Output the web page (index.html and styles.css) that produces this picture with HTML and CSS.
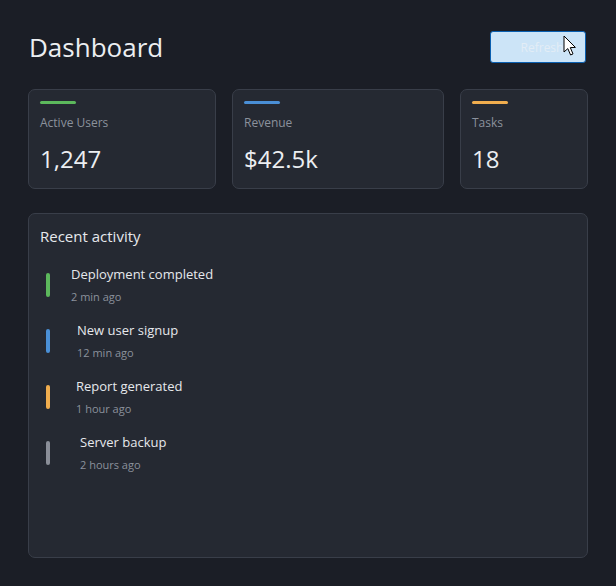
FILE: index.html
```html
<!DOCTYPE html>
<html lang="en">
<head>
<meta charset="utf-8">
<title>Dashboard</title>
<link rel="stylesheet" href="styles.css">
</head>
<body>
<div class="page">
  <header class="header">
    <h1 class="title">Dashboard</h1>
    <div class="btn-wrap">
      <button class="btn" type="button">Refresh</button>
      <svg class="cursor" width="14" height="22" viewBox="0 0 14 22" aria-hidden="true">
        <path d="M1 1 L1 17 L4.8 13.6 L7.6 20 L10 18.9 L7.3 12.6 L12.4 12.4 Z" fill="#ffffff" stroke="#000000" stroke-width="1" stroke-linejoin="miter"/>
      </svg>
    </div>
  </header>

  <section class="stats">
    <div class="card">
      <div class="accent accent-green"></div>
      <div class="label">Active Users</div>
      <div class="value">1,247</div>
    </div>
    <div class="card">
      <div class="accent accent-blue"></div>
      <div class="label">Revenue</div>
      <div class="value">$42.5k</div>
    </div>
    <div class="card">
      <div class="accent accent-orange"></div>
      <div class="label">Tasks</div>
      <div class="value">18</div>
    </div>
  </section>

  <section class="panel">
    <h2 class="panel-title">Recent activity</h2>
    <ul class="list">
      <li class="item">
        <span class="bar bar-green"></span>
        <div class="item-text">
          <div class="item-title">Deployment completed</div>
          <div class="item-time">2 min ago</div>
        </div>
      </li>
      <li class="item item-2">
        <span class="bar bar-blue"></span>
        <div class="item-text">
          <div class="item-title">New user signup</div>
          <div class="item-time">12 min ago</div>
        </div>
      </li>
      <li class="item item-3">
        <span class="bar bar-orange"></span>
        <div class="item-text">
          <div class="item-title">Report generated</div>
          <div class="item-time">1 hour ago</div>
        </div>
      </li>
      <li class="item item-4">
        <span class="bar bar-gray"></span>
        <div class="item-text">
          <div class="item-title">Server backup</div>
          <div class="item-time">2 hours ago</div>
        </div>
      </li>
    </ul>
  </section>
</div>
</body>
</html>
```
FILE: styles.css
```css
* { box-sizing: border-box; }

html, body {
  margin: 0;
  padding: 0;
  background: #1b1e26;
}

body {
  font-family: "Open Sans", "Noto Sans", "Liberation Sans", sans-serif;
  color: #e6e8ec;
  width: 616px;
  height: 586px;
  overflow: hidden;
}

.page {
  padding: 27px 28px 28px 28px;
  display: flex;
  flex-direction: column;
  height: 586px;
}

.header {
  display: flex;
  justify-content: space-between;
  align-items: center;
  height: 40px;
  margin-bottom: 22px;
}

.title {
  margin: 0 0 0 1px;
  font-size: 26px;
  font-weight: 400;
  line-height: 40px;
  color: #eceef1;
}

.btn-wrap {
  position: relative;
  margin-right: 2px;
}

.btn {
  width: 96px;
  height: 32px;
  background: #cce4f7;
  border: 1px solid #0a5fb0;
  border-radius: 3px;
  color: #e3edf6;
  font-family: inherit;
  font-size: 12px;
  padding: 0 0 0 8px;
  display: block;
}

.cursor {
  position: absolute;
  left: 73px;
  top: 4px;
}

.stats {
  display: grid;
  grid-template-columns: 188px 212px 128px;
  column-gap: 16px;
  margin-bottom: 24px;
}

.card {
  height: 100px;
  background: #252932;
  border: 1px solid #393e49;
  border-radius: 7px;
  padding: 11px 11px;
}

.accent {
  width: 36px;
  height: 3px;
  border-radius: 2px;
}
.accent-green { background: #5cb85c; }
.accent-blue { background: #4a8fd6; }
.accent-orange { background: #f0ad4e; }

.label {
  margin-top: 11px;
  font-size: 12px;
  line-height: 16px;
  color: #8b919c;
}

.value {
  margin-top: 13px;
  font-size: 24px;
  line-height: 30px;
  color: #eceef1;
}

.panel {
  flex: 1;
  background: #252932;
  border: 1px solid #393e49;
  border-radius: 7px;
  padding: 11px 11px;
}

.panel-title {
  margin: 0;
  font-size: 15px;
  font-weight: 400;
  line-height: 22px;
  color: #e6e8ec;
}

.list {
  list-style: none;
  margin: 17px 0 0 0;
  padding: 0;
  display: flex;
  flex-direction: column;
  gap: 15px;
}

.item {
  display: flex;
  align-items: center;
  padding-left: 6px;
}

.bar {
  width: 4px;
  height: 24px;
  border-radius: 2px;
  flex: none;
}
.bar-green { background: #5cb85c; }
.bar-blue { background: #4a8fd6; }
.bar-orange { background: #f0ad4e; }
.bar-gray { background: #8a8e98; }

.item-text {
  margin-left: 21px;
}
.item-2 .item-text { margin-left: 27px; }
.item-3 .item-text { margin-left: 26px; }
.item-4 .item-text { margin-left: 30px; }

.item-title {
  font-size: 13px;
  line-height: 20px;
  color: #e6e8ec;
}

.item-time {
  margin-top: 5px;
  font-size: 11px;
  line-height: 16px;
  color: #8b919c;
}
```
